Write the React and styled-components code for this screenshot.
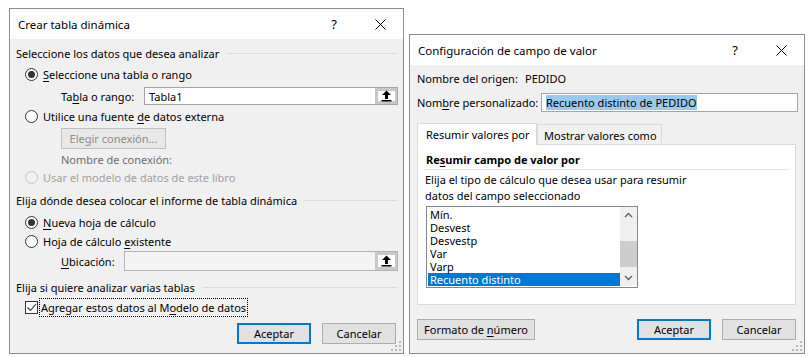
import React from "react"
import styled, { createGlobalStyle } from "styled-components"

const GlobalStyle = createGlobalStyle`
  body {
    margin: 0;
    background: #ffffff;
    font-family: "Noto Sans", "Open Sans", sans-serif;
    font-size: 11px;
    color: #000000;
    white-space: nowrap;
  }
`

// Layout
const Page = styled.div`
  box-sizing: border-box;
  height: 357px;
  padding: 8px 0 3px 9px;
  display: flex;
  align-items: flex-end;
  gap: 5px;
`

const Dialog = styled.div`
  box-sizing: border-box;
  position: relative;
  width: ${(p) => p.$w}px;
  height: ${(p) => p.$h}px;
  border: 1px solid #8c8c8c;
  background: #f0f0f0;
  display: flex;
  flex-direction: column;
`

const TitleBar = styled.div`
  height: 30px;
  flex-shrink: 0;
  background: #ffffff;
  display: flex;
  align-items: center;
  padding-left: 8px;
  font-size: 11.5px;
`

const TitleText = styled.div`
  flex: 1;
`

const TitleButton = styled.div`
  width: 46px;
  height: 30px;
  display: flex;
  align-items: center;
  justify-content: center;
  font-size: 13px;
`

const Body = styled.div`
  flex: 1;
  display: flex;
  flex-direction: column;
  padding: 0 ${(p) => p.$right}px 0 ${(p) => p.$left}px;
`

const SectionHeader = styled.div`
  height: 16px;
  margin-top: ${(p) => p.$mt || 0}px;
  display: flex;
  align-items: center;
  &::after {
    content: "";
    flex: 1;
    height: 1px;
    margin-left: 7px;
    background: #dcdcdc;
  }
`

const Row = styled.div`
  height: ${(p) => p.$h || 20}px;
  margin-top: ${(p) => p.$mt || 0}px;
  padding-left: ${(p) => p.$indent || 0}px;
  display: flex;
  align-items: center;
  color: ${(p) => (p.$muted ? "#6d6d6d" : p.$disabled ? "#a0a0a0" : "#000")};
`

const RadioCircle = styled.span`
  box-sizing: border-box;
  width: 13px;
  height: 13px;
  border-radius: 50%;
  border: 1px solid ${(p) => (p.$disabled ? "#c6c6c6" : "#333333")};
  background: ${(p) => (p.$disabled ? "#f0f0f0" : "#ffffff")};
  margin-right: 5px;
  display: flex;
  align-items: center;
  justify-content: center;
  &::after {
    content: "";
    width: 7px;
    height: 7px;
    border-radius: 50%;
    background: #333333;
    display: ${(p) => (p.$checked ? "block" : "none")};
  }
`

const CheckBox = styled.span`
  box-sizing: border-box;
  width: 13px;
  height: 13px;
  border: 1px solid #333333;
  background: #ffffff;
  margin-right: 2px;
  display: flex;
  align-items: center;
  justify-content: center;
`

const FocusLabel = styled.span`
  outline: 1px dotted #000000;
  padding: 0 1px;
  line-height: 17px;
`

const Label = styled.span`
  width: ${(p) => (p.$w ? `${p.$w}px` : "auto")};
  flex-shrink: 0;
`

const Input = styled.div`
  box-sizing: border-box;
  flex: 1;
  height: ${(p) => p.$h || 18}px;
  border: 1px solid ${(p) => (p.$disabled ? "#b4b4b4" : "#a5a5a5")};
  background: ${(p) => (p.$disabled ? "#f4f4f4" : "#ffffff")};
  display: flex;
  align-items: center;
  padding-left: 4px;
`

const Selected = styled.span`
  background: #99c9ef;
  line-height: 15px;
`

const RefButton = styled.span`
  box-sizing: border-box;
  margin-left: auto;
  width: 22px;
  height: 100%;
  border: 3px solid #c8c8c8;
  border-right-width: 2px;
  background: #ffffff;
  display: flex;
  align-items: center;
  justify-content: center;
`

const Button = styled.div`
  box-sizing: border-box;
  width: ${(p) => p.$w || 74}px;
  height: 21px;
  border: ${(p) => (p.$primary ? "2px solid #0078d7" : "1px solid #adadad")};
  background: ${(p) => (p.$disabled ? "#e8e8e8" : "#e1e1e1")};
  color: ${(p) => (p.$disabled ? "#8d8d8d" : "#000")};
  border-color: ${(p) => (p.$disabled ? "#bfbfbf" : undefined)};
  display: flex;
  align-items: center;
  justify-content: center;
`

const ButtonRow = styled.div`
  margin-top: ${(p) => p.$mt || 0}px;
  margin-right: ${(p) => p.$mr || 0}px;
  display: flex;
  gap: 11px;
  justify-content: flex-end;
`

const Spacer = styled.div`
  flex: 1;
`

const Grip = styled.svg`
  position: absolute;
  right: 1px;
  bottom: 1px;
`

// Value field settings
const Tabs = styled.div`
  margin-top: ${(p) => p.$mt || 0}px;
  margin-right: 2px;
  display: flex;
  align-items: flex-end;
  height: 22px;
`

const Tab = styled.div`
  box-sizing: border-box;
  width: ${(p) => p.$w}px;
  height: ${(p) => (p.$active ? 22 : 20)}px;
  border: 1px solid #d9d9d9;
  border-bottom: none;
  background: ${(p) => (p.$active ? "#ffffff" : "#f0f0f0")};
  margin-bottom: ${(p) => (p.$active ? -1 : 0)}px;
  position: relative;
  z-index: ${(p) => (p.$active ? 1 : 0)};
  display: flex;
  align-items: center;
  padding-left: ${(p) => (p.$active ? 8 : 6)}px;
  padding-top: ${(p) => (p.$active ? 0 : 1)}px;
`

const Panel = styled.div`
  box-sizing: border-box;
  height: 161px;
  margin-right: 2px;
  border: 1px solid #d9d9d9;
  background: #ffffff;
  display: flex;
  flex-direction: column;
  padding: 0 6px 0 6px;
`

const PanelTitle = styled.div`
  font-weight: 700;
  margin-top: 7px;
  padding: 0 2px 1px 2px;
  line-height: 16px;
  border-bottom: 1px solid #e3e3e3;
`

const PanelText = styled.div`
  margin-top: 2px;
  padding-left: 1px;
  line-height: 16px;
`

const ListBox = styled.div`
  box-sizing: border-box;
  margin-top: 2px;
  margin-left: 2px;
  width: 212px;
  height: 82px;
  border: 1px solid #828790;
  display: flex;
  padding: 0 0 1px 1px;
`

const ListItems = styled.div`
  flex: 1;
  padding-top: 1px;
`

const ListItem = styled.div`
  height: 13px;
  line-height: 13px;
  padding-left: 2px;
  background: ${(p) => (p.$selected ? "#0078d7" : "transparent")};
  color: ${(p) => (p.$selected ? "#ffffff" : "#000")};
`

const ScrollBar = styled.div`
  width: 17px;
  background: #f0f0f0;
  display: flex;
  flex-direction: column;
  align-items: center;
`

const ScrollArrow = styled.div`
  height: 17px;
  display: flex;
  align-items: center;
  justify-content: center;
`

const ScrollTrack = styled.div`
  flex: 1;
  width: 100%;
  padding-top: 18px;
  padding-bottom: 3px;
  box-sizing: border-box;
`

const Thumb = styled.div`
  height: 26px;
  background: #cdcdcd;
`

const U = styled.span`
  text-decoration: underline;
  text-underline-offset: 2px;
`

const CloseIcon = () => (
  <svg width="11" height="11" viewBox="0 0 11 11">
    <path d="M0.5 0.5 L10.5 10.5 M10.5 0.5 L0.5 10.5" stroke="#000" strokeWidth="1" />
  </svg>
)

const RefIcon = () => (
  <svg width="11" height="12" viewBox="0 0 11 12">
    <path d="M5.5 0.5 L10 5 L7 5 L7 9 L4 9 L4 5 L1 5 Z" fill="#000" />
    <rect x="0.5" y="10" width="10" height="1.5" fill="#000" />
  </svg>
)

const CheckMark = () => (
  <svg width="11" height="11" viewBox="0 0 11 11">
    <path d="M1.5 5.5 L4.5 8.5 L10 2" fill="none" stroke="#333" strokeWidth="1.1" />
  </svg>
)

const ResizeGrip = () => (
  <Grip width="12" height="12" viewBox="0 0 12 12">
    {[
      [10, 2], [10, 6], [6, 6], [10, 10], [6, 10], [2, 10],
    ].map(([x, y], i) => (
      <rect key={i} x={x - 1} y={y - 1} width="2" height="2" fill="#b9b9b9" />
    ))}
  </Grip>
)

const Chevron = ({ down }) => (
  <svg width="9" height="6" viewBox="0 0 9 6">
    <path
      d={down ? "M1 1 L4.5 4.5 L8 1" : "M1 5 L4.5 1.5 L8 5"}
      fill="none"
      stroke="#606060"
      strokeWidth="1.4"
    />
  </svg>
)

const Title = ({ children }) => (
  <TitleBar>
    <TitleText>{children}</TitleText>
    <TitleButton>?</TitleButton>
    <TitleButton>
      <CloseIcon />
    </TitleButton>
  </TitleBar>
)

const items = ["Mín.", "Desvest", "Desvestp", "Var", "Varp", "Recuento distinto"]

const CreatePivot = () => (
  <Dialog $w={395} $h={346}>
    <Title>Crear tabla dinámica</Title>
    <Body $left={6} $right={5}>
      <SectionHeader $mt={6}>Seleccione los datos que desea analizar</SectionHeader>
      <Row $mt={3} $indent={9}>
        <RadioCircle $checked />
        <span><U>S</U>eleccione una tabla o rango</span>
      </Row>
      <Row $mt={3} $h={18} $indent={45}>
        <Label $w={83}>Ta<U>b</U>la o rango:</Label>
        <Input>
          <span>Tabla1</span>
          <RefButton><RefIcon /></RefButton>
        </Input>
      </Row>
      <Row $mt={1} $indent={9}>
        <RadioCircle />
        <span>Utilice una fuente <U>d</U>e datos externa</span>
      </Row>
      <Row $mt={2} $h={21} $indent={45}>
        <Button $w={105} $disabled>Elegir conexión...</Button>
      </Row>
      <Row $mt={1} $h={18} $indent={45} $muted>Nombre de conexión:</Row>
      <Row $h={18} $indent={9} $disabled>
        <RadioCircle $disabled />
        <span>Usar el modelo de datos de este libro</span>
      </Row>
      <SectionHeader $mt={6}>Elija dónde desea colocar el informe de tabla dinámica</SectionHeader>
      <Row $mt={4} $indent={9}>
        <RadioCircle $checked />
        <span><U>N</U>ueva hoja de cálculo</span>
      </Row>
      <Row $h={19} $indent={9}>
        <RadioCircle />
        <span>Hoja de cálculo <U>e</U>xistente</span>
      </Row>
      <Row $h={20} $indent={45}>
        <Label $w={63}><U>U</U>bicación:</Label>
        <Input $h={20} $disabled>
          <RefButton><RefIcon /></RefButton>
        </Input>
      </Row>
      <SectionHeader $mt={8}>Elija si quiere analizar varias tablas</SectionHeader>
      <Row $mt={2} $indent={9}>
        <CheckBox><CheckMark /></CheckBox>
        <FocusLabel>Agregar estos datos al M<U>o</U>delo de datos</FocusLabel>
      </Row>
      <ButtonRow $mt={6} $mr={2}>
        <Button $primary>Aceptar</Button>
        <Button>Cancelar</Button>
      </ButtonRow>
    </Body>
    <ResizeGrip />
  </Dialog>
)

const ValueField = () => (
  <Dialog $w={396} $h={320}>
    <Title>Configuración de campo de valor</Title>
    <Body $left={7} $right={6}>
      <Row $mt={4} $h={18}>
        <Label $w={108}>Nombre del origen:</Label>
        <span>PEDIDO</span>
      </Row>
      <Row $mt={6} $h={19}>
        <Label $w={124}>Nom<U>b</U>re personalizado:</Label>
        <Input $h={19}>
          <Selected>Recuento distinto de PEDIDO</Selected>
        </Input>
      </Row>
      <Tabs $mt={10}>
        <Tab $active $w={120}>Resumir valores por</Tab>
        <Tab $w={125}>Mostrar valores como</Tab>
      </Tabs>
      <Panel>
        <PanelTitle>Re<U>s</U>umir campo de valor por</PanelTitle>
        <PanelText>
          Elija el tipo de cálculo que desea usar para resumir
          <br />
          datos del campo seleccionado
        </PanelText>
        <ListBox>
          <ListItems>
            {items.map((item, index) => (
              <ListItem key={index} $selected={index === items.length - 1}>
                {item}
              </ListItem>
            ))}
          </ListItems>
          <ScrollBar>
            <ScrollArrow><Chevron /></ScrollArrow>
            <ScrollTrack><Thumb /></ScrollTrack>
            <ScrollArrow><Chevron down /></ScrollArrow>
          </ScrollBar>
        </ListBox>
      </Panel>
      <Spacer />
      <ButtonRow $mr={2}>
        <Button $w={118}>
          <span>Formato de <U>n</U>úmero</span>
        </Button>
        <Spacer />
        <Button $primary>Aceptar</Button>
        <Button>Cancelar</Button>
      </ButtonRow>
      <Spacer />
    </Body>
    <ResizeGrip />
  </Dialog>
)

const App = () => {
  return (
    <>
      <GlobalStyle />
      <Page>
        <CreatePivot />
        <ValueField />
      </Page>
    </>
  )
}

export default App
